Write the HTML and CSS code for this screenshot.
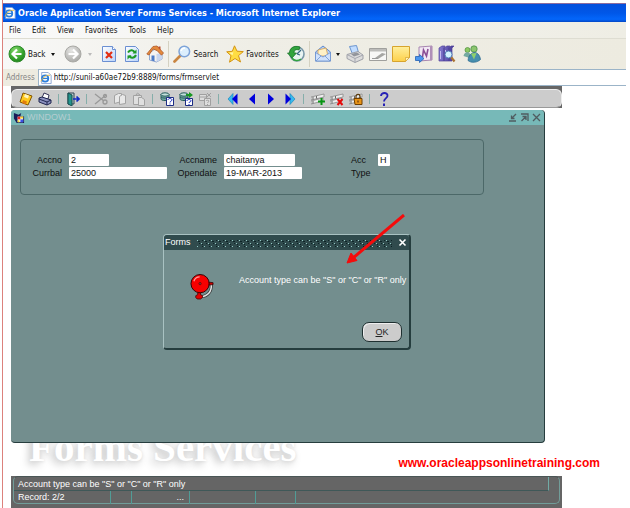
FILE: index.html
```html
<!DOCTYPE html>
<html lang="en">
<head>
<meta charset="utf-8">
<title>Oracle Application Server Forms Services - Microsoft Internet Explorer</title>
<link rel="stylesheet" href="styles.css">
</head>
<body>
<svg class="defs" aria-hidden="true">
  <defs>
    <radialGradient id="green" cx=".4" cy=".3" r=".8"><stop offset="0" stop-color="#8bdc70"/><stop offset=".6" stop-color="#36a32c"/><stop offset="1" stop-color="#187a18"/></radialGradient>
    <radialGradient id="grey" cx=".4" cy=".3" r=".8"><stop offset="0" stop-color="#e6e6e4"/><stop offset="1" stop-color="#a3a3a0"/></radialGradient>
    <linearGradient id="page" x2="1" y2="1"><stop offset="0" stop-color="#fff"/><stop offset="1" stop-color="#b9d3fa"/></linearGradient>
    <linearGradient id="note" x2="0" y2="1"><stop offset="0" stop-color="#ffef9c"/><stop offset="1" stop-color="#fdd04a"/></linearGradient>
    <linearGradient id="book" x2="1" y2="0"><stop offset="0" stop-color="#8378cf"/><stop offset="1" stop-color="#453a98"/></linearGradient>
    <symbol id="ie" viewBox="0 0 14 14"><path d="M2 .5h7.500L13 4v9.500H2z" fill="#fff" stroke="#7d9ad0"/><circle cx="6" cy="7.500" r="3.700" fill="none" stroke="#2b7fdd" stroke-width="2"/><path d="M3 7.500h7" stroke="#2b7fdd" stroke-width="1.500"/><path d="M1 11C4 5 8 3 12 4" fill="none" stroke="#e6b738"/></symbol>
    <symbol id="database" viewBox="0 0 14 14"><path d="M1 2v5c0 2 8 2 8 0V2" fill="#75aaa4" stroke="#265d5c"/><ellipse cx="5" cy="2.500" rx="4" ry="1.700" fill="#c2dfda" stroke="#265d5c"/><path d="M1 5c1 1.500 7 1.500 8 0" fill="none" stroke="#265d5c"/></symbol>
    <symbol id="record" viewBox="0 0 14 14"><path d="M0 5l13-3v3L0 8zM0 9l12-3v3L0 12z" fill="#eee" stroke="#888" stroke-width=".8"/><path d="M2 5v2.500M5.500 4v2.500M2 9v2.500" stroke="#666"/></symbol>
  </defs>
</svg>

<div class="browser">
  <header class="titlebar">
    <svg class="ie-icon" aria-hidden="true"><use href="#ie"/></svg>
    <h1>Oracle Application Server Forms Services - Microsoft Internet Explorer</h1>
  </header>

  <nav class="menubar">
    <button>File</button><button>Edit</button><button>View</button><button>Favorites</button><button>Tools</button><button>Help</button>
  </nav>

  <div class="toolbar">
    <button class="labelled"><svg viewBox="0 0 18 18" aria-hidden="true"><circle cx="9" cy="9" r="8" fill="url(#green)" stroke="#2e8b2c"/><path d="M13.500 9H5M9 4.500L4.500 9L9 13.500" fill="none" stroke="#fff" stroke-width="2.200"/></svg>Back<i class="caret"></i></button>
    <button class="labelled forward" aria-label="Forward"><svg viewBox="0 0 18 18" aria-hidden="true"><circle cx="9" cy="9" r="8" fill="url(#grey)" stroke="#a9a9a5"/><path d="M4.500 9H13M9 4.500L13.500 9L9 13.500" fill="none" stroke="#fff" stroke-width="2.200"/></svg><i class="caret faint"></i></button>
    <button aria-label="Stop"><svg viewBox="0 0 18 18" aria-hidden="true"><path d="M2.500 1.500h10l3 3v12h-13z" fill="url(#page)" stroke="#6a8fd2"/><path d="M12.500 1.500v3h3" fill="#fff" stroke="#6a8fd2"/><path d="M6 7l6 6M12 7l-6 6" stroke="#e32d12" stroke-width="2.200"/></svg></button>
    <button aria-label="Refresh" class="refresh"><svg viewBox="0 0 18 18" aria-hidden="true"><path d="M2.500 1.500h10l3 3v12h-13z" fill="url(#page)" stroke="#6a8fd2"/><path d="M5 7.500c2-3.500 6-2.500 6.500 0M13 10c-2 4-6 3-6.500.5" fill="none" stroke="#1d9a25" stroke-width="2"/><path d="M13.500 4.500v4H9.500zM4.500 14.500v-4h4z" fill="#1d9a25"/></svg></button>
    <button aria-label="Home"><svg viewBox="0 0 18 18" aria-hidden="true"><path d="M3.500 8v7l7 2 5.500-3V8L9 4z" fill="#f5f3f1" stroke="#7895c7" stroke-width=".8"/><path d="M10.500 17V9L16 8v6z" fill="#c9d6ef"/><path d="M.8 9L7 1.500 11 1l6.500 7-2 2.200L11 5.500 7 4 3 10z" fill="#e58a3c" stroke="#ad592a" stroke-width=".8"/><path d="M5.500 10.500h3v5.700l-3-.8z" fill="#4c7bc8"/><path d="M12.500 1.500h2v3.500l-2-2z" fill="#bb4b2b"/></svg></button>
    <span class="divider"></span>
    <button class="labelled"><svg viewBox="0 0 18 18" aria-hidden="true"><path d="M7.500 10.500L1.500 16.500" stroke="#c98642" stroke-width="2.700" stroke-linecap="round"/><circle cx="11.300" cy="6.500" r="5.300" fill="#dceffd" stroke="#7da3d8" stroke-width="1.500"/><path d="M8 6c.5-2 2-3 4-3" stroke="#fff" stroke-width="1.500" fill="none"/></svg>Search</button>
    <button class="labelled favorites"><svg viewBox="0 0 18 18" aria-hidden="true"><path d="M8.500.8l2.500 5.400 6.300.4-4.800 4 2 6.400-5.500-3.500-5.500 3.700 1.500-6.500L.7 6.800l5.600-.5z" fill="#ffdd42" stroke="#d39315"/><path d="M8.500 3l-1.300 4.200-4 .6 3.300 2.500" fill="#fff5a8"/></svg>Favorites</button>
    <button aria-label="History" class="history"><svg viewBox="0 0 18 18" aria-hidden="true"><circle cx="10" cy="9" r="7" fill="#e8f4f2" stroke="#7998a8" stroke-width="1.600"/><path d="M10 9l4-4M10 9l3 1" stroke="#356782" stroke-width="1.300"/><path d="M13 2C7 0 2.500 3 2.500 8H.5l4.500 5 4.500-5H7c0-3 2-4 5-3z" fill="#32a43e" stroke="#197428" stroke-width=".8"/><path d="M5 13c2 3 6 3.500 9 1" fill="none" stroke="#32a43e" stroke-width="1.500"/></svg></button>
    <span class="divider"></span>
    <button aria-label="Mail" class="labelled mail"><svg viewBox="0 0 18 18" aria-hidden="true"><path d="M1.500 7L9 1l7.500 6v9h-15z" fill="#b3cef6" stroke="#628bcb"/><path d="M4 5l8-2 2 8H4z" fill="#fff1c7" stroke="#d9a24e" stroke-width=".8"/><path d="M1.500 7.500L9 12l7.500-4.500V16h-15z" fill="#cfe1fc" stroke="#6d93cf" stroke-width=".8"/><path d="M2 16l5-5M16 16l-5-5" stroke="#6d93cf" stroke-width=".8"/></svg><i class="caret"></i></button>
    <div class="tools">
      <button aria-label="Print"><svg viewBox="0 0 18 18" aria-hidden="true"><path d="M3.500 1.500l7-1 2 7-6 1.500z" fill="#c2ddff" stroke="#6c95ce"/><path d="M1 9.500l11-3 5 3.500v4l-8 3.500-8-4z" fill="#dcdcdc" stroke="#9699a0" stroke-width=".9"/><path d="M1 9.500l8 4 8-3.500M9 13.500v4" fill="none" stroke="#a5a7af"/><path d="M5 9l6-1.500 3 2-6 2z" fill="#92959c"/></svg></button>
      <button aria-label="Edit"><svg viewBox="0 0 18 18" aria-hidden="true"><path d="M.5 3.500h17v12H.5z" fill="#f7f7f6" stroke="#a0a09d"/><path d="M1 4h16v2.500H1z" fill="#bcbcba"/><path d="M6 13l7-5 4 1-8 5z" fill="#a5a5a3"/><path d="M3 13.500h6" stroke="#999"/></svg></button>
      <button aria-label="Notes"><svg viewBox="0 0 18 18" aria-hidden="true"><path d="M.5 1.500h17v11l-4 4H.5z" fill="url(#note)" stroke="#d7a42e"/><path d="M17.500 12.500h-4v4z" fill="#fff2b5" stroke="#d7a42e" stroke-width=".7"/></svg></button>
      <button aria-label="Send to OneNote"><svg viewBox="0 0 18 18" aria-hidden="true"><path d="M4 2l13-1v14L4 16z" fill="#f2e8f4" stroke="#a786b0"/><path d="M15 1.200l2-.2v14l-2 .2z" fill="#b08fb8"/><path d="M7.500 12l1-7 3 6 1.500-7" fill="none" stroke="#8b4f97" stroke-width="1.600"/><path d="M.5 11.500h4v-2l4.500 4-4.500 4v-2h-4z" fill="#4b95ef" stroke="#2362b2" stroke-width=".8"/></svg></button>
      <button aria-label="Research"><svg viewBox="0 0 18 18" aria-hidden="true"><path d="M1 3l3-2h3L6 3v13H1zM6 3l3-2h3l-1 2v13H6zM11 3l2-2h3l-2 2v13h-3z" fill="url(#book)" stroke="#51449a" stroke-width=".7"/><path d="M2.500 6v8M7.500 5v2" stroke="#c3bbef"/><path d="M13 12l3.500 4.500" stroke="#ac7433" stroke-width="2.200"/><circle cx="10.500" cy="9.500" r="3.500" fill="#d3f1ff" stroke="#5481b7"/></svg></button>
      <button aria-label="Messenger" class="messenger"><svg viewBox="0 0 18 18" aria-hidden="true"><circle cx="4.500" cy="5" r="2.500" fill="#8cc963" stroke="#4b8d3a" stroke-width=".7"/><path d="M.5 11c1-5 6-5 8 0l-2 2z" fill="#75a9a0"/><circle cx="11" cy="4" r="3.200" fill="#8cc56e" stroke="#408542" stroke-width=".7"/><path d="M5 15.500c1-10 11-11 12.500-1-3 3-9 4-12.500 1z" fill="#478fae" stroke="#25648d" stroke-width=".7"/><path d="M8 8.500l3 6 2.500-6.500z" fill="#8fd06c"/></svg></button>
    </div>
  </div>

  <div class="addressbar">
    <label for="url">Address</label>
    <div class="address-box">
      <svg class="ie-icon" aria-hidden="true"><use href="#ie"/></svg>
      <input id="url" type="text" value="http://sunil-a60ae72b9:8889/forms/frmservlet">
    </div>
  </div>

  <main class="applet">
    <div class="forms-strip">
      <div class="forms-toolbar">
        <button aria-label="Save"><svg viewBox="0 0 14 14"><path d="M4 1l9 3-4 9-8-3z" fill="#ffc91d" stroke="#815600"/><path d="M6 2l4 1.500-1 3-4-1.500z" fill="#fff5bd"/><path d="M4 8l4 1.500-1 3-4-1.500z" fill="#e17d0c"/></svg></button>
        <button aria-label="Print"><svg viewBox="0 0 14 14"><path d="M4 6l2-5 5 2-1 4z" fill="#fff" stroke="#335"/><path d="M1 6l3-1 9 3v3l-4 2-8-3z" fill="#8b90be" stroke="#202750"/><path d="M1 7l8 3 4-2M9 10v3" fill="none" stroke="#202750"/></svg></button>
        <span class="notch"></span>
        <button aria-label="Exit"><svg viewBox="0 0 14 14"><path d="M2 1h6v11H2z" fill="#b7cdcd" stroke="#345"/><path d="M2 1l4 2v11l-4-2z" fill="#24958e" stroke="#164d4c"/><path d="M7 7h6M10.500 4.500L13 7l-2.500 2.500" stroke="#102ac5" stroke-width="1.700" fill="none"/></svg></button>
        <span class="notch"></span>
        <button aria-label="Cut"><svg viewBox="0 0 14 14" fill="none" stroke="#999" stroke-width="1.300"><path d="M1 2l9 7M1 12l11-9"/><circle cx="11" cy="4" r="1.500"/><circle cx="11" cy="10" r="2"/></svg></button>
        <button aria-label="Copy"><svg viewBox="0 0 14 14" fill="#e8e8e8" stroke="#a2a2a2"><path d="M1.500 3.500l4-2h3v8l-7 2z"/><path d="M6.500 4.500l3-2 3 1v8l-6 1z"/></svg></button>
        <button aria-label="Paste"><svg viewBox="0 0 14 14" fill="#dfdfdf" stroke="#a2a2a2"><path d="M1.500 3.500h8v9h-8zM4 3l1.500-2L8 3z"/><path d="M6.500 5.500h3l3 2v6h-6z"/></svg></button>
        <span class="notch"></span>
        <button aria-label="Enter query"><svg viewBox="0 0 14 14"><use href="#database"/><path d="M6.500 5.500h7v8h-7z" fill="#fff" stroke="#1c2c83"/><path d="M8 8c0-2 4-2 4 0 0 1-2 1-2 2.500M10 11.500v1" fill="none" stroke="#152ac1"/></svg></button>
        <button aria-label="Execute query"><svg viewBox="0 0 14 14"><use href="#database"/><path d="M7 2h3V0l4 3-4 3V4H7z" fill="#199722"/><path d="M6.500 6.500h7v7h-7z" fill="#fff" stroke="#1c2c83"/><path d="M8 9c0-2 4-2 4 0 0 1-2 .5-2 2M10 12v1" fill="none" stroke="#152ac1"/></svg></button>
        <button aria-label="Cancel query"><svg viewBox="0 0 14 14" fill="#ddd" stroke="#a0a0a0"><path d="M1.500 2.500h7v6h-7zM1.500 5h7M9 1l4 4M13 1L9 5"/><path d="M6.500 6.500h6v7h-6z"/><path d="M8 9c0-1 3-1 3 0s-1.500 1-1.500 2M9.500 12v1" fill="none"/></svg></button>
        <span class="notch"></span>
        <button aria-label="Previous block"><svg viewBox="0 0 14 14"><path d="M7 1.500v11L2 7z" fill="#39b9ef" stroke="#137fb4" stroke-width=".6"/><path d="M11.500 1.500v11L6 7z" fill="#0000dc"/></svg></button>
        <button aria-label="Previous record"><svg viewBox="0 0 14 14"><path d="M10 1.500v11L4 7z" fill="#0000dc"/></svg></button>
        <button aria-label="Next record"><svg viewBox="0 0 14 14"><path d="M4 1.500v11L10 7z" fill="#0000dc"/></svg></button>
        <button aria-label="Next block"><svg viewBox="0 0 14 14"><path d="M7 1.500v11L12 7z" fill="#39b9ef" stroke="#137fb4" stroke-width=".6"/><path d="M2.500 1.500v11L8 7z" fill="#0000dc"/></svg></button>
        <span class="notch"></span>
        <button aria-label="Insert record"><svg viewBox="0 0 14 14"><use href="#record"/><path d="M10.500 6v7M7 9.500h7" stroke="#079512" stroke-width="2"/></svg></button>
        <button aria-label="Remove record"><svg viewBox="0 0 14 14"><use href="#record"/><path d="M7.500 7l5 6M12.500 7l-5 6" stroke="#e50a0a" stroke-width="2"/></svg></button>
        <button aria-label="Lock record"><svg viewBox="0 0 14 14"><use href="#record"/><path d="M7 7V4.500c0-3 4-3 4 0V7" fill="none" stroke="#563300" stroke-width="1.200"/><path d="M5 6.500h8v6H6z" fill="#e89418" stroke="#703f00"/><path d="M9 8.500v2" stroke="#421"/></svg></button>
        <span class="notch"></span>
        <button aria-label="Help"><svg viewBox="0 0 14 14"><path d="M4 4c0-4 7-4 6.500 0C10.500 6 7 6.500 7 9.500" fill="none" stroke="#2621b5" stroke-width="1.800"/><path d="M6 11.500h2V14H6z" fill="#2621b5"/></svg></button>
      </div>
    </div>

    <section class="window">
      <header class="window-title">
        <svg class="app-icon" viewBox="0 0 13 13" aria-hidden="true"><path d="M1 1l5 2 3-2-1 3 4 1v7H4L1 7z" fill="#161a58"/><path d="M5 5h6v6H5z" fill="#fff"/><path d="M5 5h3v3H5z" fill="#e02929"/><path d="M8 8h3v3H8z" fill="#3b51e5"/><path d="M8 5h3v2H8zM5 9h2v2H5z" fill="#f6d532"/></svg>
        <h2>WINDOW1</h2>
        <div class="window-controls">
          <button aria-label="Minimize"><svg viewBox="0 0 9 9"><path d="M8 1L4 5M3.500 2.500V5.500h3M1 8h7" /></svg></button>
          <button aria-label="Maximize"><svg viewBox="0 0 9 9"><path d="M1 1h7v7M1.500 8L6 3.500M2.500 3.500H6V7" /></svg></button>
          <button aria-label="Close window"><svg viewBox="0 0 9 9"><path d="M1 1l7 7M8 1L1 8" /></svg></button>
        </div>
      </header>

      <form class="account">
        <label for="accno">Accno</label><input id="accno" class="short" value="2">
        <label for="accname">Accname</label><input id="accname" class="medium" value="chaitanya">
        <label for="acctype" class="type">Acc<br>Type</label><input id="acctype" value="H">
        <label for="currbal">Currbal</label><input id="currbal" value="25000">
        <label for="opendate">Opendate</label><input id="opendate" class="date" value="19-MAR-2013">
      </form>

      <div class="dialog" role="alertdialog" aria-labelledby="dlg-title" aria-describedby="dlg-text">
        <header class="dialog-title">
          <h3 id="dlg-title">Forms</h3>
          <svg class="grip" aria-hidden="true"><defs><pattern id="dots" width="7" height="6" patternUnits="userSpaceOnUse"><path d="M0 1h1v1H0zM4 4h1v1H4z" fill="#93c8c4"/><path d="M1 2h2v1H1zM5 5h1v1H5zM5 1h1v1H5zM2 4h1v1H2z" fill="#0d2527"/></pattern></defs><rect width="100%" height="100%" fill="url(#dots)"/></svg>
          <button aria-label="Close dialog"><svg viewBox="0 0 9 9"><path d="M1.500 1.500l6 6M7.500 1.500l-6 6"/></svg></button>
        </header>
        <div class="dialog-body">
          <svg class="bell" viewBox="0 0 26 28" aria-hidden="true"><path d="M22 11c1 8-4 13-11 13" fill="none" stroke="#333" stroke-width="3"/><path d="M22 11c1 8-4 13-11 13" fill="none" stroke="#e4e4e4" stroke-width="1.600"/><circle cx="10.500" cy="10.500" r="9.500" fill="#f70000" stroke="#300"/><path d="M4 8c1-3 3-4.500 6-4.500" fill="none" stroke="#ff9d9d" stroke-width="1.200"/><circle cx="10.500" cy="10.500" r="1.200" fill="#933" stroke="#400" stroke-width=".6"/><path d="M20 9l4 .5v2L20 12z" fill="#c00" stroke="#300" stroke-width=".8"/><path d="M8 20h3v2l2 1v2l-2 1.500H7.500L6 25v-2l2-1z" fill="#e30000" stroke="#400" stroke-width=".8"/></svg>
          <p id="dlg-text">Account type can be "S" or "C" or "R" only</p>
        </div>
        <div class="dialog-actions"><button><u>O</u>K</button></div>
      </div>

      <svg class="arrow" viewBox="0 0 60 50" aria-hidden="true"><path d="M58 1L7 44" stroke="#f50b0b" stroke-width="3"/><path d="M1 49l4-10 6 7.500z" fill="#f50b0b" stroke="#f50b0b"/></svg>
    </section>

    <div class="backdrop">
      <span class="watermark">Forms Services</span>
      <a href="#">www.oracleappsonlinetraining.com</a>
    </div>

    <footer class="status">
      <div class="status-inner">
        <div class="message">Account type can be "S" or "C" or "R" only</div>
        <div class="cells"><span>Record: 2/2</span><span></span><span class="dots">...</span><span></span><span></span><span></span></div>
      </div>
    </footer>
  </main>
</div>
</body>
</html>
```

FILE: styles.css
```css
* { box-sizing: border-box; }

body {
  margin: 0;
  background: #fff;
  font: 9px/13px "Liberation Sans", Arial, sans-serif;
  color: #111;
}

h1, h2, h3, p { margin: 0; font-size: inherit; font-weight: normal; }

button, input {
  margin: 0;
  padding: 0;
  border: 0;
  background: none;
  color: inherit;
  font: inherit;
}

svg { display: block; }

.defs { position: absolute; width: 0; height: 0; }

.browser {
  display: flex;
  flex-direction: column;
  height: 100vh;
  min-height: 400px;
  margin: 0 4px 0 2px;
  padding-top: 3px;
  border-left: 1px solid #dc817c;
}

.ie-icon { width: 12px; height: 12px; flex: none; }

.titlebar {
  display: flex;
  align-items: center;
  gap: 2px;
  height: 19px;
  padding-left: 1px;
  border-top: 1px solid #8b6c9e;
  background: linear-gradient(#0450dc, #0057e8 50%, #0366fb 85%, #0346c4);
  color: #fff;
}

.titlebar h1 { font: bold 9px/14px "DejaVu Sans Condensed", "DejaVu Sans", sans-serif; white-space: nowrap; }

.menubar, .toolbar, .addressbar {
  font-family: "DejaVu Sans Condensed", "DejaVu Sans", sans-serif;
  font-size: 8px;
}

.menubar {
  display: flex;
  align-items: center;
  gap: 11px;
  height: 16px;
  padding-left: 6px;
  background: linear-gradient(90deg, #f9f9f9, #eeede4);
}

.toolbar {
  display: flex;
  align-items: center;
  height: 31px;
  padding-left: 5px;
  border-top: 1px solid #deddd2;
  background: linear-gradient(90deg, #f8f8f7, #efeee6 40%, #edebe0);
}

.toolbar svg { width: 18px; height: 18px; }

.labelled { display: flex; align-items: center; gap: 2px; }

.caret {
  margin-left: 4px;
  border: 2px solid transparent;
  border-top: 3px solid #111;
  border-bottom: 0;
}

.faint { border-top-color: #bbb; }
.forward { margin: 0 8px 0 9px; }
.refresh { margin: 0 5px; }

.divider { width: 1px; height: 26px; margin: 0 4px; background: #d5d2c2; }

.favorites { margin: 0 8px; }
.mail { gap: 0; }
.tools { display: flex; gap: 5px; margin-left: 6px; }
.messenger { margin-left: 2px; }

.addressbar {
  display: flex;
  align-items: center;
  gap: 3px;
  height: 17px;
  padding-left: 3px;
  background: #edebe0;
  color: #858585;
}

.address-box {
  flex: 1;
  display: flex;
  align-items: center;
  gap: 2px;
  height: 17px;
  padding-left: 1px;
  border: 1px solid #9bb4c8;
  border-right: 0;
  background: #fff;
  color: #111;
}

.address-box input { flex: 1; }

.applet {
  flex: 1;
  display: flex;
  flex-direction: column;
  padding: 0 64px 0 8px;
}

.forms-strip { padding-top: 3px; background: #666; }

.forms-toolbar {
  display: flex;
  align-items: center;
  height: 19px;
  padding-left: 4px;
  border: 1px solid #eee;
  border-bottom-color: #999;
  border-radius: 6px;
  background: #ccc;
}

.forms-toolbar button { width: 19px; }
.forms-toolbar svg { width: 14px; height: 14px; margin: 0 auto; }

.notch { width: 1px; height: 10px; margin: 0 4px; background: #86aeaa; }

.window {
  position: relative;
  z-index: 1;
  flex: 1;
  margin: 2px 17px 0 0;
  border-right: 1px solid #263d3e;
  border-bottom: 1px solid #263d3e;
  border-radius: 4px;
  background: #738e8e;
}

.window-title {
  display: flex;
  align-items: center;
  gap: 2px;
  height: 15px;
  padding: 0 3px 0 2px;
  border-radius: 4px 4px 0 0;
  background: #77b9b8;
  color: #b4cdd0;
}

.app-icon { width: 12px; height: 12px; }
.window-controls { display: flex; gap: 3px; margin-left: auto; }
.window-controls svg { width: 9px; height: 9px; fill: none; stroke: #505c60; stroke-width: 1.300; }

.account {
  display: grid;
  grid-template-columns: 41px 98px 43px 120px 20px 12px;
  grid-auto-rows: 13px;
  column-gap: 7px;
  margin: 14px 60px 0 9px;
  padding: 14px 0;
  border: 1px solid #4c6868;
  border-radius: 4px;
}

.account label { text-align: right; }

.account .type {
  grid-row: span 2;
  text-align: left;
}

.account input {
  width: 100%;
  height: 12px;
  padding-left: 2px;
  border-radius: 1px;
  background: #fff;
}

.account .short { width: 40px; }
.account .medium { width: 71px; }
.account .date { width: 78px; }

.dialog {
  position: absolute;
  top: 124px;
  left: 152px;
  width: 248px;
  border: 1px solid #a9c2c2;
  border-right: 2px solid #253d3e;
  border-bottom: 2px solid #253d3e;
  border-radius: 4px;
  background: #738e8e;
  color: #fff;
}

.dialog-title {
  display: flex;
  align-items: center;
  gap: 6px;
  height: 15px;
  padding: 0 2px 0 1px;
  border-radius: 3px 3px 0 0;
  background: #304b4d;
}

.grip { flex: 1; min-width: 0; height: 8px; }
.dialog-title button svg { width: 9px; height: 9px; stroke: #fff; stroke-width: 1.600; }

.dialog-body { display: flex; gap: 24px; padding: 23px 0 0 26px; }
.bell { width: 25px; height: 28px; flex: none; }
.dialog-body p { padding-top: 1px; white-space: nowrap; }

.dialog-actions { display: flex; justify-content: flex-end; padding: 21px 7px 6px; }

.dialog-actions button {
  width: 40px;
  height: 20px;
  border: 1px solid #1f3031;
  border-radius: 7px;
  background: #ccc;
  box-shadow: inset 1px 1px #eee;
  color: #222;
}

.arrow { position: absolute; top: 104px; left: 335px; width: 60px; height: 50px; }

.backdrop {
  display: flex;
  justify-content: space-between;
  height: 33px;
  margin-right: -38px;
}

.watermark {
  padding-left: 18px;
  font: bold 41px/9px "Liberation Serif", serif;
  color: #fff;
  text-shadow: 0 1px 3px #ddd, -3px 3px 9px #bbb;
  white-space: nowrap;
}

.backdrop a {
  padding-top: 14px;
  color: #f00;
  font-size: 12px;
  font-weight: bold;
  text-decoration: none;
}

.status {
  height: 32px;
  padding: 0 2px 3px;
  background: #656565;
  color: #fff;
}

.status-inner {
  height: 28px;
  border: 1px solid #719d99;
  border-top-color: #4a5656;
  border-radius: 5px;
}

.message {
  height: 14px;
  margin-right: 10px;
  padding: 1px 0 0 4px;
  border-right: 1px solid #71aaa5;
  border-bottom: 1px solid #3f5858;
}

.cells { display: grid; grid-template-columns: 97px 21px 58px 66px 40px 1fr; height: 12px; }
.cells span { padding-left: 4px; border-right: 1px solid #519c96; }
.cells .dots { padding: 0 5px 0 0; text-align: right; }
.cells span:last-child { border: 0; }
```
